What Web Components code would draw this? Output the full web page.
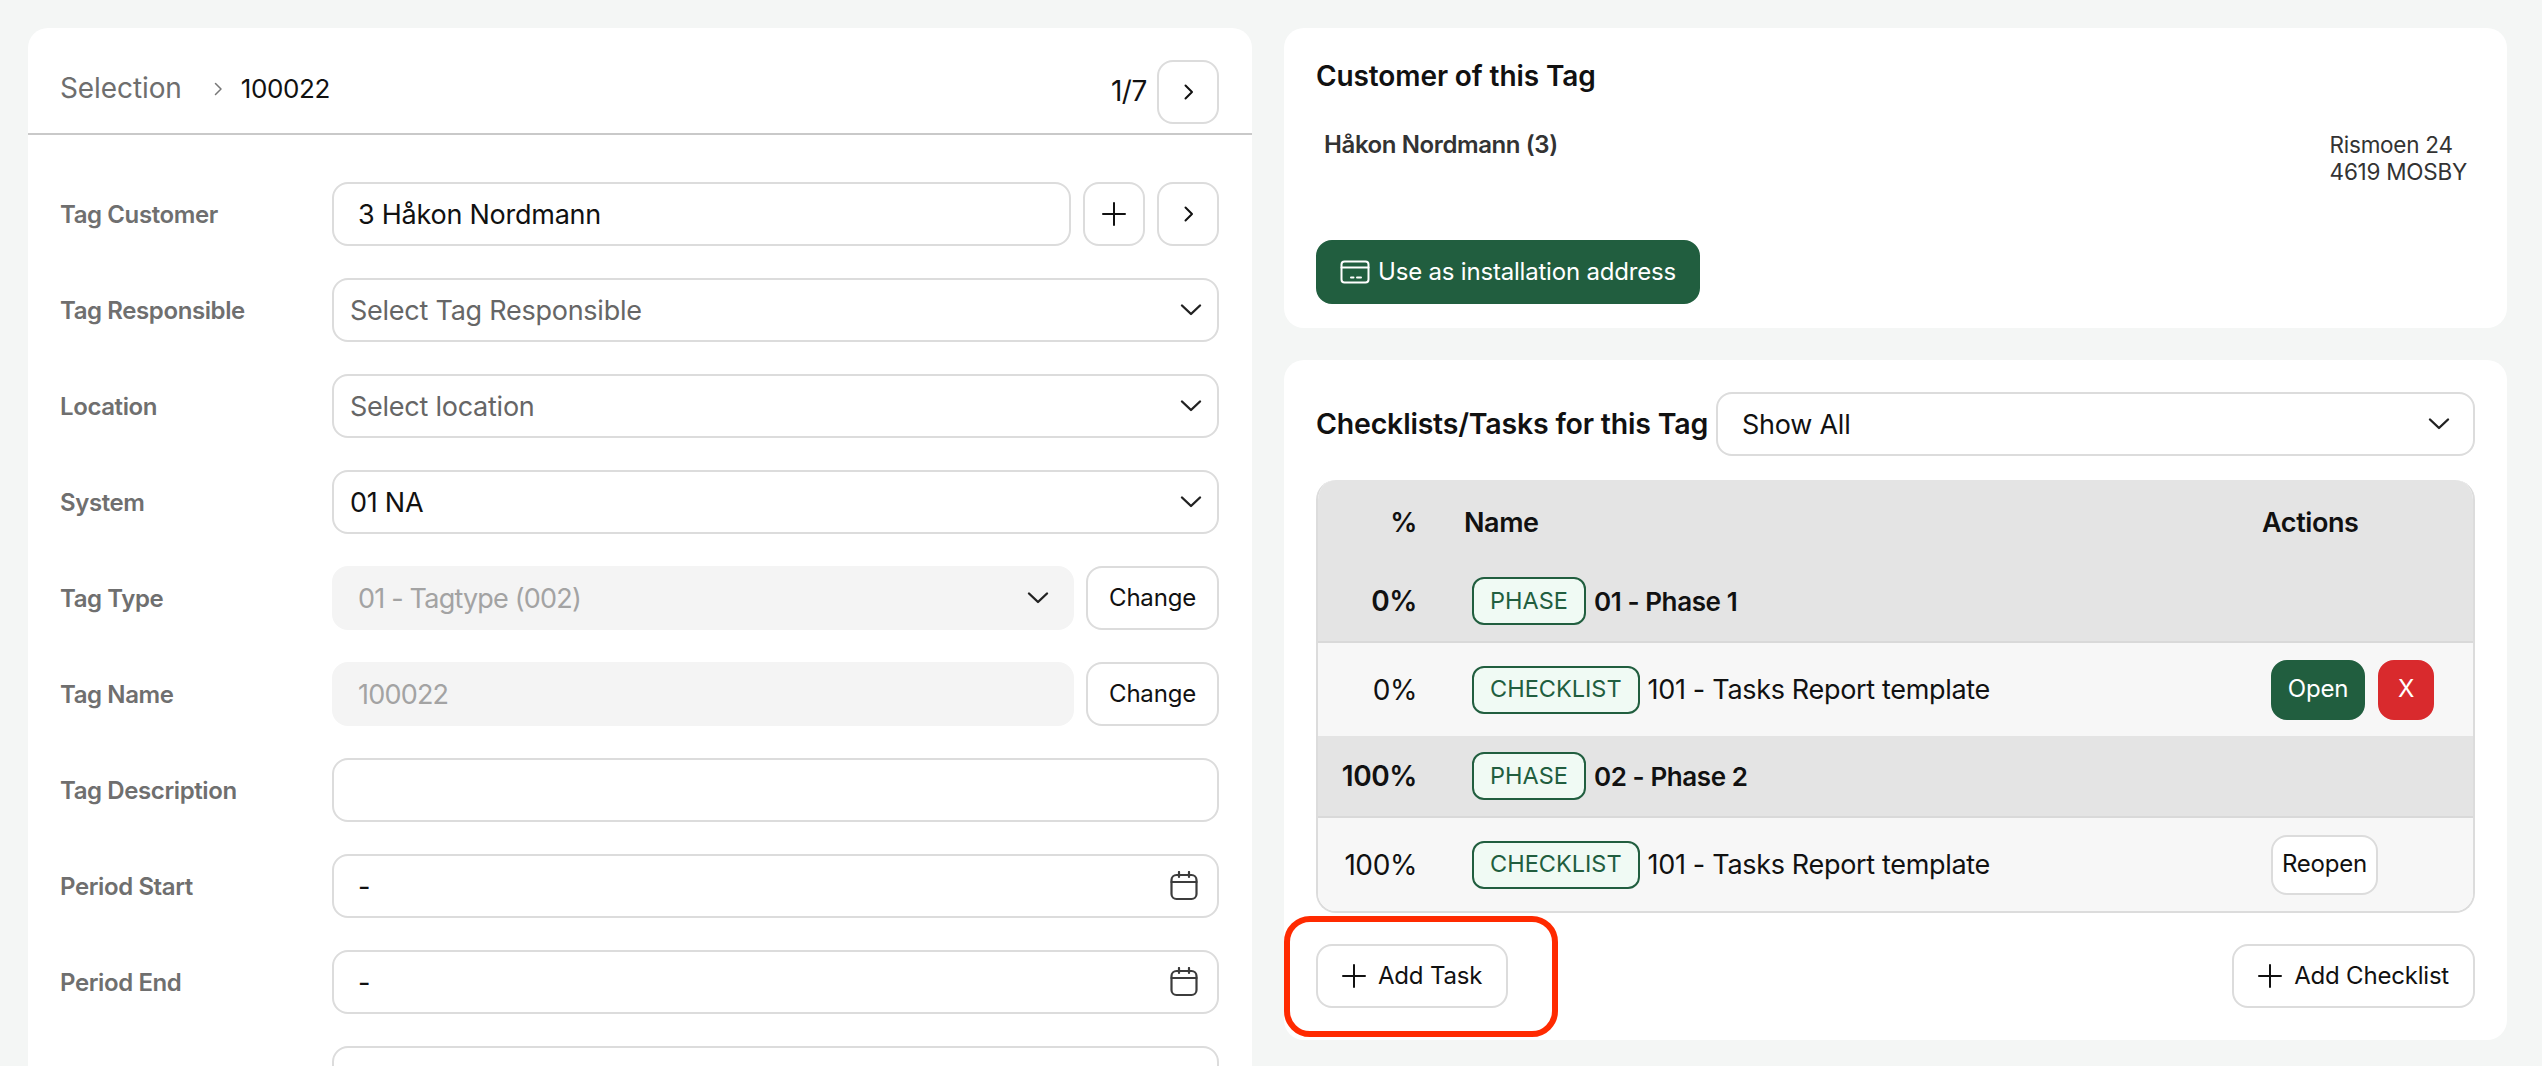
<!DOCTYPE html>
<html lang="en">
<head>
<meta charset="utf-8">
<title>Tag</title>
<style>
  html, body { margin: 0; height: 1066px; overflow: hidden; background: #f4f6f5; }
  body { font: 400 27px/1.2 Inter, "Liberation Sans", sans-serif; color: #111; letter-spacing: -0.25px; }
</style>
</head>
<body>
<tag-page>
  <tag-card slot="left" flush>
    <tag-header></tag-header>
    <tag-form>
      <tag-field label="Tag Customer">
        <tag-input value="3 Håkon Nordmann" inset></tag-input>
        <tag-button icon="plus" square></tag-button>
        <tag-button icon="right" square></tag-button>
      </tag-field>
      <tag-field label="Tag Responsible"><tag-input value="Select Tag Responsible" trail="down" muted></tag-input></tag-field>
      <tag-field label="Location"><tag-input value="Select location" trail="down" muted></tag-input></tag-field>
      <tag-field label="System"><tag-input value="01 NA" trail="down"></tag-input></tag-field>
      <tag-field label="Tag Type">
        <tag-input value="01 - Tagtype (002)" trail="down" disabled inset style="letter-spacing:-0.8px"></tag-input>
        <tag-button wide>Change</tag-button>
      </tag-field>
      <tag-field label="Tag Name">
        <tag-input value="100022" disabled inset style="letter-spacing:-0.8px"></tag-input>
        <tag-button wide>Change</tag-button>
      </tag-field>
      <tag-field label="Tag Description"><tag-input></tag-input></tag-field>
      <tag-field label="Period Start"><tag-input value="-" trail="cal" inset></tag-input></tag-field>
      <tag-field label="Period End"><tag-input value="-" trail="cal" inset></tag-input></tag-field>
      <tag-field label=""><tag-input></tag-input></tag-field>
    </tag-form>
  </tag-card>

  <tag-card slot="right">
    <tag-customer></tag-customer>
  </tag-card>

  <tag-card slot="right">
    <tag-tasks></tag-tasks>
  </tag-card>
</tag-page>

<script>
// Icons shared by the elements below
const ICONS = {
  right: `<svg width="24" height="24" viewBox="0 0 24 24" fill="none" stroke="currentColor" stroke-width="2" stroke-linecap="round" stroke-linejoin="round"><path d="M9.500 5.500 16 12l-6.500 6.500"/></svg>`,
  crumb: `<svg width="16" height="16" viewBox="0 0 16 16" fill="none" stroke="#777" stroke-width="1.500" stroke-linecap="round" stroke-linejoin="round"><path d="M5.500 2.500 11 8l-5.500 5.500"/></svg>`,
  down: `<svg width="24" height="24" viewBox="0 0 24 24" fill="none" stroke="#222" stroke-width="2.400" stroke-linecap="round" stroke-linejoin="round"><path d="M3 7.500 12 16l9-8.500"/></svg>`,
  plus: `<svg width="24" height="24" viewBox="0 0 24 24" fill="none" stroke="#111" stroke-width="2" stroke-linecap="round"><path d="M12 1v22M1 12h22"/></svg>`,
  cal: `<svg class="cal" width="28" height="30" viewBox="0 0 28 30" fill="none" stroke="#3c3c3c" stroke-width="2.200" stroke-linecap="round" stroke-linejoin="round"><rect x="1.500" y="4" width="25" height="24" rx="5"/><path d="M1.500 11h25M9 1v5M19 1v5"/></svg>`,
  card: `<svg width="30" height="24" viewBox="0 0 30 24" fill="none" stroke="#fff" stroke-width="2" stroke-linecap="round"><rect x="1.500" y="1.500" width="27" height="21" rx="3"/><path d="M1.500 7.500h27M11 17.500h2.500M17 17.500h4"/></svg>`
};

class TagPage extends HTMLElement {
  constructor() {
    super();
    this.attachShadow({ mode: "open" }).innerHTML = `
    <style>
      :host { display: grid; grid-template-columns: 1224px 1223px; gap: 32px; padding: 28px 0 0 28px; }
      .col { display: flex; flex-direction: column; gap: 32px; }
      .mark {
        position: absolute; left: 1284px; top: 916px; width: 274px; height: 121px;
        box-sizing: border-box; border: 6px solid #ff2a00; border-radius: 26px;
      }
    </style>
    <div class="col"><slot name="left"></slot></div>
    <div class="col"><slot name="right"></slot></div>
    <div class="mark"></div>`;
  }
}

class TagCard extends HTMLElement {
  constructor() {
    super();
    this.attachShadow({ mode: "open" }).innerHTML = `
    <style>
      :host { display: block; background: #fff; border-radius: 20px; padding: 32px; }
      :host([flush]) { padding: 0; border-radius: 20px 20px 0 0; }
    </style>
    <slot></slot>`;
  }
}

class TagHeader extends HTMLElement {
  constructor() {
    super();
    this.attachShadow({ mode: "open" }).innerHTML = `
    <style>
      :host { display: flex; align-items: flex-start; height: 73px; padding: 32px 33px 0 32px; border-bottom: 2px solid #c9c9c9; }
      .crumbs { display: flex; align-items: center; height: 58px; font-size: 26px; color: #111; letter-spacing: -0.4px; }
      .crumbs span:first-child { color: #6e6e6e; font-size: 28px; letter-spacing: -0.1px; }
      .crumbs svg { margin: 0 15px 0 28px; }
      .pager { margin-left: auto; display: flex; align-items: center; gap: 10px; font-size: 28px; letter-spacing: -0.4px; }
    </style>
    <div class="crumbs"><span>Selection</span>${ICONS.crumb}<span>100022</span></div>
    <div class="pager"><span>1/7</span><tag-button icon="right" square></tag-button></div>`;
  }
}

class TagForm extends HTMLElement {
  constructor() {
    super();
    this.attachShadow({ mode: "open" }).innerHTML = `
    <style>
      :host { display: flex; flex-direction: column; gap: 32px; padding: 47px 33px 0 32px; }
    </style>
    <slot></slot>`;
  }
}

class TagField extends HTMLElement {
  constructor() {
    super();
    this.attachShadow({ mode: "open" }).innerHTML = `
    <style>
      :host { display: grid; grid-template-columns: 272px 1fr; align-items: center; }
      .label { padding-top: 2px; font-size: 24px; font-weight: 600; color: #6f6f6f; letter-spacing: -0.4px; }
      .ctl { display: flex; gap: 12px; }
    </style>
    <div class="label">${this.getAttribute("label")}</div>
    <div class="ctl"><slot></slot></div>`;
  }
}

class TagInput extends HTMLElement {
  constructor() {
    super();
    const value = this.getAttribute("value") || "";
    const trail = this.getAttribute("trail");
    this.attachShadow({ mode: "open" }).innerHTML = `
    <style>
      :host {
        display: flex; flex: 1; min-width: 0; align-items: center; justify-content: space-between;
        box-sizing: border-box; height: 64px; padding: 0 14px 0 16px;
        background: #fff; border: 2px solid #dcdcdc; border-radius: 16px; color: #111;
      }
      :host([inset]) { padding: 0 22px 0 24px; }
      :host([muted]) { color: #666; }
      :host([disabled]) { background: #f4f4f4; border-color: #f4f4f4; color: #a3a3a3; }
      span { padding-top: 2px; }
      svg { flex: none; }
      .cal { margin-right: -3px; }
    </style>
    <span>${value}</span>${trail ? ICONS[trail] : ""}`;
  }
}

class TagButton extends HTMLElement {
  constructor() {
    super();
    const icon = this.getAttribute("icon");
    this.attachShadow({ mode: "open" }).innerHTML = `
    <style>
      :host {
        display: inline-flex; flex: none; align-items: center; justify-content: center; gap: 12px;
        box-sizing: border-box; height: 64px; padding: 0 24px;
        background: #fff; border: 2px solid #dcdcdc; border-radius: 16px;
        font-size: 24px; font-weight: 400; color: #111; letter-spacing: -0.2px;
      }
      :host([square]) { width: 62px; padding: 0; }
      :host([wide]) { width: 133px; padding: 0; }
      :host([primary]) { background: #215e3f; border-color: #215e3f; color: #fff; }
      :host([danger]) { background: #d92a2d; border-color: #d92a2d; color: #fff; }
      :host([small]) { height: 60px; padding: 0; }
    </style>
    ${icon ? ICONS[icon] : ""}<slot></slot>`;
  }
}

class TagCustomer extends HTMLElement {
  constructor() {
    super();
    this.attachShadow({ mode: "open" }).innerHTML = `
    <style>
      :host { display: block; margin-bottom: -8px; }
      h2 { margin: 0; font-size: 28px; line-height: 32px; font-weight: 600; color: #111; letter-spacing: -0.1px; }
      .info { display: flex; justify-content: space-between; padding: 39px 8px 0 8px; font-size: 22.500px; line-height: 27px; color: #333; height: 114px; box-sizing: border-box; }
      .name { font-weight: 600; font-size: 24px; letter-spacing: -0.4px; }
      .gap { height: 34px; }
      tag-button { width: 384px; gap: 8px; padding: 0; }
    </style>
    <h2>Customer of this Tag</h2>
    <div class="info"><span class="name">Håkon Nordmann (3)</span><span>Rismoen 24<br>4619 MOSBY</span></div>
    <div class="gap"></div>
    <tag-button primary icon="card">Use as installation address</tag-button>`;
  }
}

class TagBadge extends HTMLElement {
  constructor() {
    super();
    this.attachShadow({ mode: "open" }).innerHTML = `
    <style>
      :host {
        display: inline-flex; align-items: center; box-sizing: border-box; height: 48px; padding: 0 16px;
        background: #f0faf4; border: 2px solid #215e3f; border-radius: 12px;
        font-size: 23.500px; font-weight: 400; color: #215e3f; letter-spacing: 0;
      }
    </style>
    <slot></slot>`;
  }
}

class TagRow extends HTMLElement {
  constructor() {
    super();
    const kind = this.getAttribute("kind");
    this.attachShadow({ mode: "open" }).innerHTML = `
    <style>
      :host { display: grid; grid-template-columns: 99px 1fr 211px; align-items: center; box-sizing: border-box; background: #f7f7f7; height: 93px; letter-spacing: -0.32px; }
      :host([kind="phase"]) { background: #e4e4e4; height: 82px; font-weight: 600; border-bottom: 2px solid #d9d9d9; font-size: 26px; letter-spacing: -0.4px; }
      .pct { padding-top: 2px; text-align: right; font-size: 28px; letter-spacing: -0.4px; }
      .name { display: flex; align-items: center; gap: 8px; padding-left: 55px; }
      .name span { padding-top: 1px; }
      .act { display: flex; gap: 13px; padding-left: 9px; }
    </style>
    <div class="pct">${this.getAttribute("pct")}</div>
    <div class="name"><tag-badge>${kind === "phase" ? "PHASE" : "CHECKLIST"}</tag-badge><span>${this.getAttribute("name")}</span></div>
    <div class="act"><slot></slot></div>`;
  }
}

class TagTasks extends HTMLElement {
  constructor() {
    super();
    this.attachShadow({ mode: "open" }).innerHTML = `
    <style>
      :host { display: block; }
      .top { display: flex; align-items: center; gap: 8px; margin-bottom: 24px; }
      h2 { margin: 0; font-size: 28.500px; font-weight: 600; white-space: nowrap; letter-spacing: -0.2px; }
      .table { border: 2px solid #dcdcdc; border-top: 0; border-radius: 20px; overflow: hidden; }
      .head { display: grid; grid-template-columns: 99px 1fr 211px; align-items: center; box-sizing: border-box; height: 81px; padding-top: 6px; background: #e4e4e4; font-size: 27px; font-weight: 600; letter-spacing: -0.4px; }
      .head .pct { text-align: right; }
      .head .nm { padding-left: 47px; }
      .foot { display: flex; justify-content: space-between; margin-top: 31px; }
      .reopen { width: 107px; }
      .open { width: 94px; }
      .x { width: 56px; }
    </style>
    <div class="top"><h2>Checklists/Tasks for this Tag</h2><tag-input value="Show All" trail="down" inset></tag-input></div>
    <div class="table">
      <div class="head"><div class="pct">%</div><div class="nm">Name</div><div>Actions</div></div>
      <tag-row kind="phase" pct="0%" name="01 - Phase 1"></tag-row>
      <tag-row pct="0%" name="101 - Tasks Report template">
        <tag-button class="open" primary small>Open</tag-button><tag-button class="x" danger small>X</tag-button>
      </tag-row>
      <tag-row kind="phase" pct="100%" name="02 - Phase 2"></tag-row>
      <tag-row pct="100%" name="101 - Tasks Report template">
        <tag-button class="reopen" small>Reopen</tag-button>
      </tag-row>
    </div>
    <div class="foot">
      <tag-button icon="plus">Add Task</tag-button>
      <tag-button icon="plus">Add Checklist</tag-button>
    </div>`;
  }
}

// Children first, so the nested elements are upgraded inside their parents' shadow roots
customElements.define("tag-button", TagButton);
customElements.define("tag-input", TagInput);
customElements.define("tag-badge", TagBadge);
customElements.define("tag-row", TagRow);
customElements.define("tag-field", TagField);
customElements.define("tag-form", TagForm);
customElements.define("tag-header", TagHeader);
customElements.define("tag-customer", TagCustomer);
customElements.define("tag-tasks", TagTasks);
customElements.define("tag-card", TagCard);
customElements.define("tag-page", TagPage);
</script>
</body>
</html>
